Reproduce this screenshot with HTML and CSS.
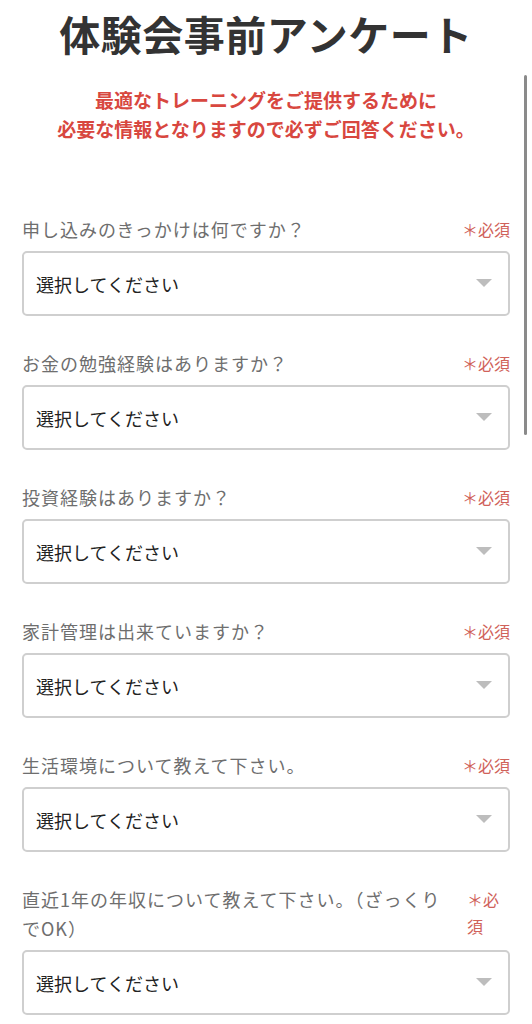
FILE: index.html
```html
<!DOCTYPE html>
<html lang="ja">
<head>
	<meta charset="utf-8">
	<title>体験会事前アンケート</title>
	<link rel="stylesheet" href="styles.css">
</head>
<body>

	<div id="enquete">
		<h1 class="titulo">体験会事前アンケート</h1>
		<p class="aviso">最適なトレーニングをご提供するために<br>必要な情報となりますので必ずご回答ください。</p>

		<form class="formulario">
			<div class="pergunta">
				<div class="rotulo">
					<label class="texto">申し込みのきっかけは何ですか？</label>
					<span class="obrigatorio">＊必須</span>
				</div>
				<div class="caixa">
					<select><option>選択してください</option></select>
				</div>
			</div>

			<div class="pergunta">
				<div class="rotulo">
					<label class="texto">お金の勉強経験はありますか？</label>
					<span class="obrigatorio">＊必須</span>
				</div>
				<div class="caixa">
					<select><option>選択してください</option></select>
				</div>
			</div>

			<div class="pergunta">
				<div class="rotulo">
					<label class="texto">投資経験はありますか？</label>
					<span class="obrigatorio">＊必須</span>
				</div>
				<div class="caixa">
					<select><option>選択してください</option></select>
				</div>
			</div>

			<div class="pergunta">
				<div class="rotulo">
					<label class="texto">家計管理は出来ていますか？</label>
					<span class="obrigatorio">＊必須</span>
				</div>
				<div class="caixa">
					<select><option>選択してください</option></select>
				</div>
			</div>

			<div class="pergunta">
				<div class="rotulo">
					<label class="texto">生活環境について教えて下さい。</label>
					<span class="obrigatorio">＊必須</span>
				</div>
				<div class="caixa">
					<select><option>選択してください</option></select>
				</div>
			</div>

			<div class="pergunta">
				<div class="rotulo">
					<label class="texto">直近1年の年収について教えて下さい。（ざっくりでOK）</label>
					<span class="obrigatorio">＊必須</span>
				</div>
				<div class="caixa">
					<select><option>選択してください</option></select>
				</div>
			</div>
		</form>
	</div>

	<div class="rolagem"></div>

</body>
</html>
```

FILE: styles.css
```css
body{
	margin: 0;
	background-color: #fff;
	font-family: "Noto Sans CJK JP", "Noto Sans", sans-serif;
}
#enquete{
	padding: 0 22px;
}
.titulo{
	margin: 6px 0 0;
	font-size: 41px;
	line-height: 54px;
	font-weight: 700;
	color: #333;
	text-align: center;
	letter-spacing: 0.5px;
}
.aviso{
	margin: 25px 0 0;
	font-size: 19px;
	line-height: 29px;
	font-weight: 700;
	color: #d8473f;
	text-align: center;
}
.formulario{
	margin-top: 72px;
}
.pergunta{
	margin-bottom: 33px;
}
.rotulo{
	display: flex;
	align-items: flex-start;
	gap: 12px;
	margin-bottom: 7px;
}
.texto{
	flex: 1 1 auto;
	font-size: 18px;
	letter-spacing: 1px;
	line-height: 29px;
	color: #6e6e6e;
}
.obrigatorio{
	flex: 0 1 auto;
	font-size: 16px;
	line-height: 27px;
	padding-top: 1px;
	color: #d0625a;
}
.caixa{
	position: relative;
}
.caixa select{
	-webkit-appearance: none;
	appearance: none;
	display: block;
	width: 100%;
	height: 65px;
	margin: 0;
	padding: 0 40px 0 12px;
	border: 2px solid #cfcfcf;
	border-radius: 5px;
	background-color: #fff;
	font-family: inherit;
	font-size: 18px;
	color: #222;
	box-sizing: border-box;
}
.caixa::after{
	content: "";
	position: absolute;
	right: 18px;
	top: 28px;
	border-left: 8px solid transparent;
	border-right: 8px solid transparent;
	border-top: 8px solid #bdbdbd;
	pointer-events: none;
}
.rolagem{
	position: fixed;
	right: 5px;
	top: 75px;
	width: 3px;
	height: 360px;
	border-radius: 2px;
	background-color: #8a8a8a;
}
```
